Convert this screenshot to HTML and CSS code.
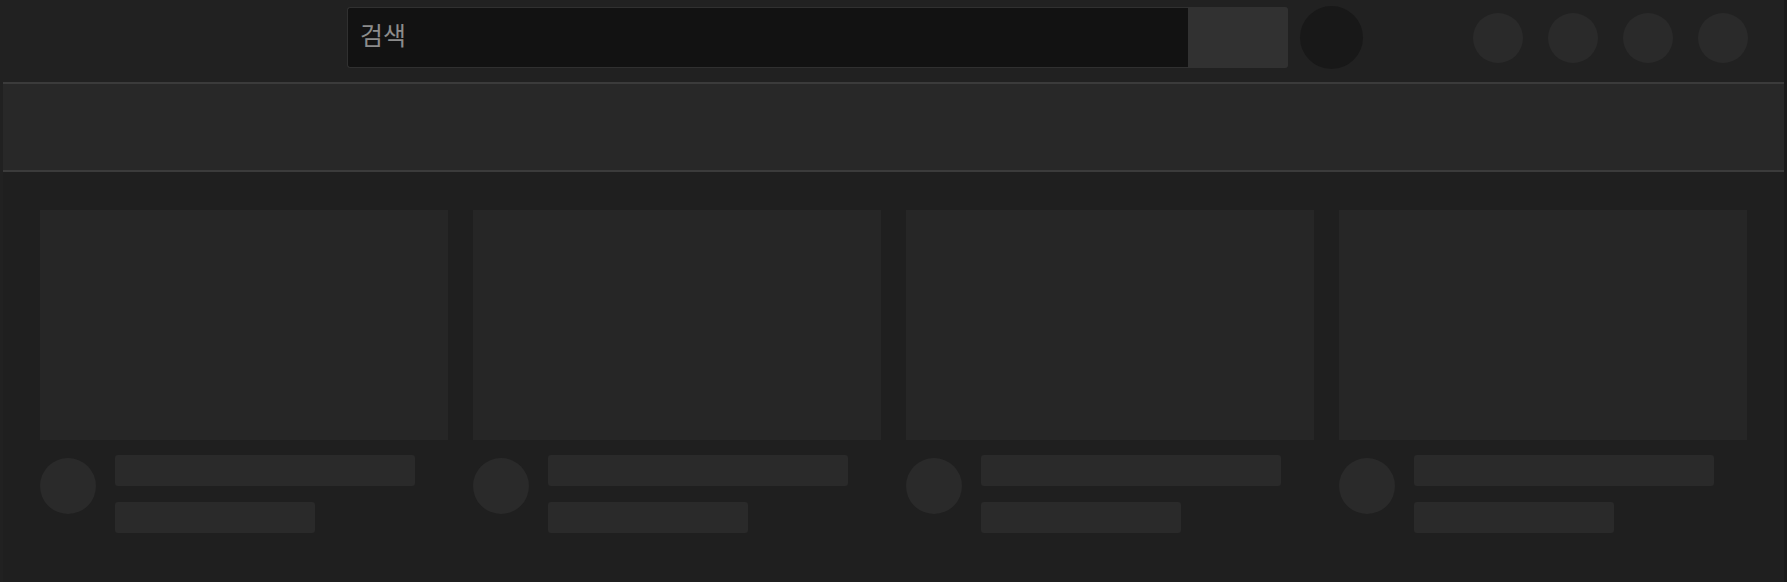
FILE: index.html
```html
<!DOCTYPE html>
<html lang="ko">
<head>
  <meta charset="UTF-8">
  <meta name="viewport" content="width=device-width, initial-scale=1.0">
  <title>Loading</title>
  <link rel="stylesheet" href="styles.css">
</head>
<body>
  <div class="page">
    <header class="header">
      <form class="search">
        <input class="search-input" type="text" placeholder="검색">
        <button class="search-button" type="button"></button>
      </form>
      <div class="mic"></div>
      <div class="icons">
        <div class="icon"></div>
        <div class="icon"></div>
        <div class="icon"></div>
        <div class="icon"></div>
      </div>
    </header>
    <div class="main">
      <div class="chips"></div>
      <div class="grid">
        <div class="card">
          <div class="thumb"></div>
          <div class="meta">
            <div class="avatar"></div>
            <div class="lines">
              <div class="line title"></div>
              <div class="line sub"></div>
            </div>
          </div>
        </div>
        <div class="card">
          <div class="thumb"></div>
          <div class="meta">
            <div class="avatar"></div>
            <div class="lines">
              <div class="line title"></div>
              <div class="line sub"></div>
            </div>
          </div>
        </div>
        <div class="card">
          <div class="thumb"></div>
          <div class="meta">
            <div class="avatar"></div>
            <div class="lines">
              <div class="line title"></div>
              <div class="line sub"></div>
            </div>
          </div>
        </div>
        <div class="card">
          <div class="thumb"></div>
          <div class="meta">
            <div class="avatar"></div>
            <div class="lines">
              <div class="line title"></div>
              <div class="line sub"></div>
            </div>
          </div>
        </div>
      </div>
    </div>
  </div>
</body>
</html>
```

FILE: styles.css
```css
* {
  box-sizing: border-box;
}
html, body {
  margin: 0;
  height: 100%;
}
body {
  background-color: #212121;
  font-family: "Noto Sans CJK KR", "Noto Sans", sans-serif;
  overflow: hidden;
}
.page {
  display: flex;
  flex-direction: column;
  min-height: 100vh;
  border-right: 3px solid #1a1a1a;
}
.header {
  display: flex;
  align-items: flex-start;
  height: 82px;
  padding: 7px 36px 0 347px;
}
.search {
  display: flex;
  width: 941px;
  height: 61px;
  margin: 0;
}
.search-input {
  flex: 1;
  height: 100%;
  padding: 0 12px 7px;
  background-color: #121212;
  border: 1px solid #303030;
  border-right: none;
  border-radius: 3px 0 0 3px;
  color: #ddd;
  font-family: inherit;
  font-size: 25px;
  outline: none;
}
.search-input::placeholder {
  color: #8c8c8c;
}
.search-button {
  width: 100px;
  height: 100%;
  background-color: #313131;
  border: none;
  border-radius: 0 3px 3px 0;
}
.mic {
  width: 63px;
  height: 63px;
  margin-left: 12px;
  margin-top: -1px;
  border-radius: 50%;
  background-color: #181818;
}
.icons {
  display: flex;
  gap: 25px;
  margin-left: auto;
  margin-top: 6px;
}
.icon {
  width: 50px;
  height: 50px;
  border-radius: 50%;
  background-color: #2a2a2a;
}
.main {
  flex: 1;
  margin-left: 3px;
  background-color: #1f1f1f;
}
.chips {
  height: 90px;
  background-color: #282828;
  border-top: 2px solid #3b3b3b;
  border-bottom: 2px solid #3b3b3b;
}
.grid {
  display: grid;
  grid-template-columns: repeat(4, 1fr);
  gap: 25px;
  padding: 38px 37px 0 37px;
}
.thumb {
  aspect-ratio: 16 / 9;
  background-color: #262626;
}
.meta {
  display: flex;
  align-items: flex-start;
  margin-top: 15px;
}
.avatar {
  flex: none;
  width: 56px;
  height: 56px;
  margin-top: 3px;
  border-radius: 50%;
  background-color: #2a2a2a;
}
.lines {
  display: flex;
  flex-direction: column;
  gap: 16px;
  margin-left: 19px;
}
.line {
  height: 31px;
  border-radius: 3px;
  background-color: #2a2a2a;
}
.title {
  width: 300px;
}
.sub {
  width: 200px;
}
```
